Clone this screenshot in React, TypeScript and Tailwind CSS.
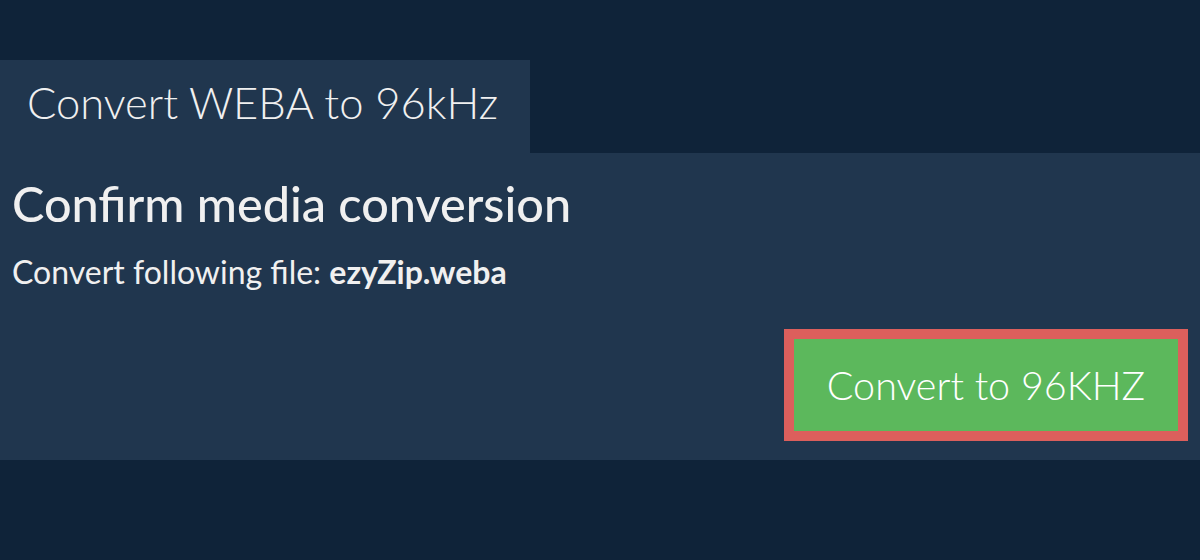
export default function App() {
  return (
    <div className="w-[1200px] h-[560px] bg-[#0f2339] pt-[60px]" style={{ fontFamily: "Lato, 'Open Sans', sans-serif" }}>
      <div className="w-[530px] h-[93px] bg-[#20364e] flex items-center pl-[27px] pb-[8px]">
        <span className="text-[43.5px] font-light text-[#f0f0f0] leading-none">Convert WEBA to 96kHz</span>
      </div>
      <div className="bg-[#20364e] h-[307px] px-[12px] pt-[22px] flex flex-col">
        <h1 className="text-[48.6px] font-medium text-[#f0f0f0] leading-[56px]">Confirm media conversion</h1>
        <p className="text-[32px] text-[#f0f0f0] mt-[22px] leading-[38px]">
          Convert following file: <b className="font-bold">ezyZip.weba</b>
        </p>
        <div className="flex justify-end mt-[38px]">
          <button className="w-[404px] h-[112px] border-[10px] border-[#dc5f5c] bg-[#5cb85c] text-white text-[39.5px] font-light">
            Convert to 96KHZ
          </button>
        </div>
      </div>
    </div>
  );
}
